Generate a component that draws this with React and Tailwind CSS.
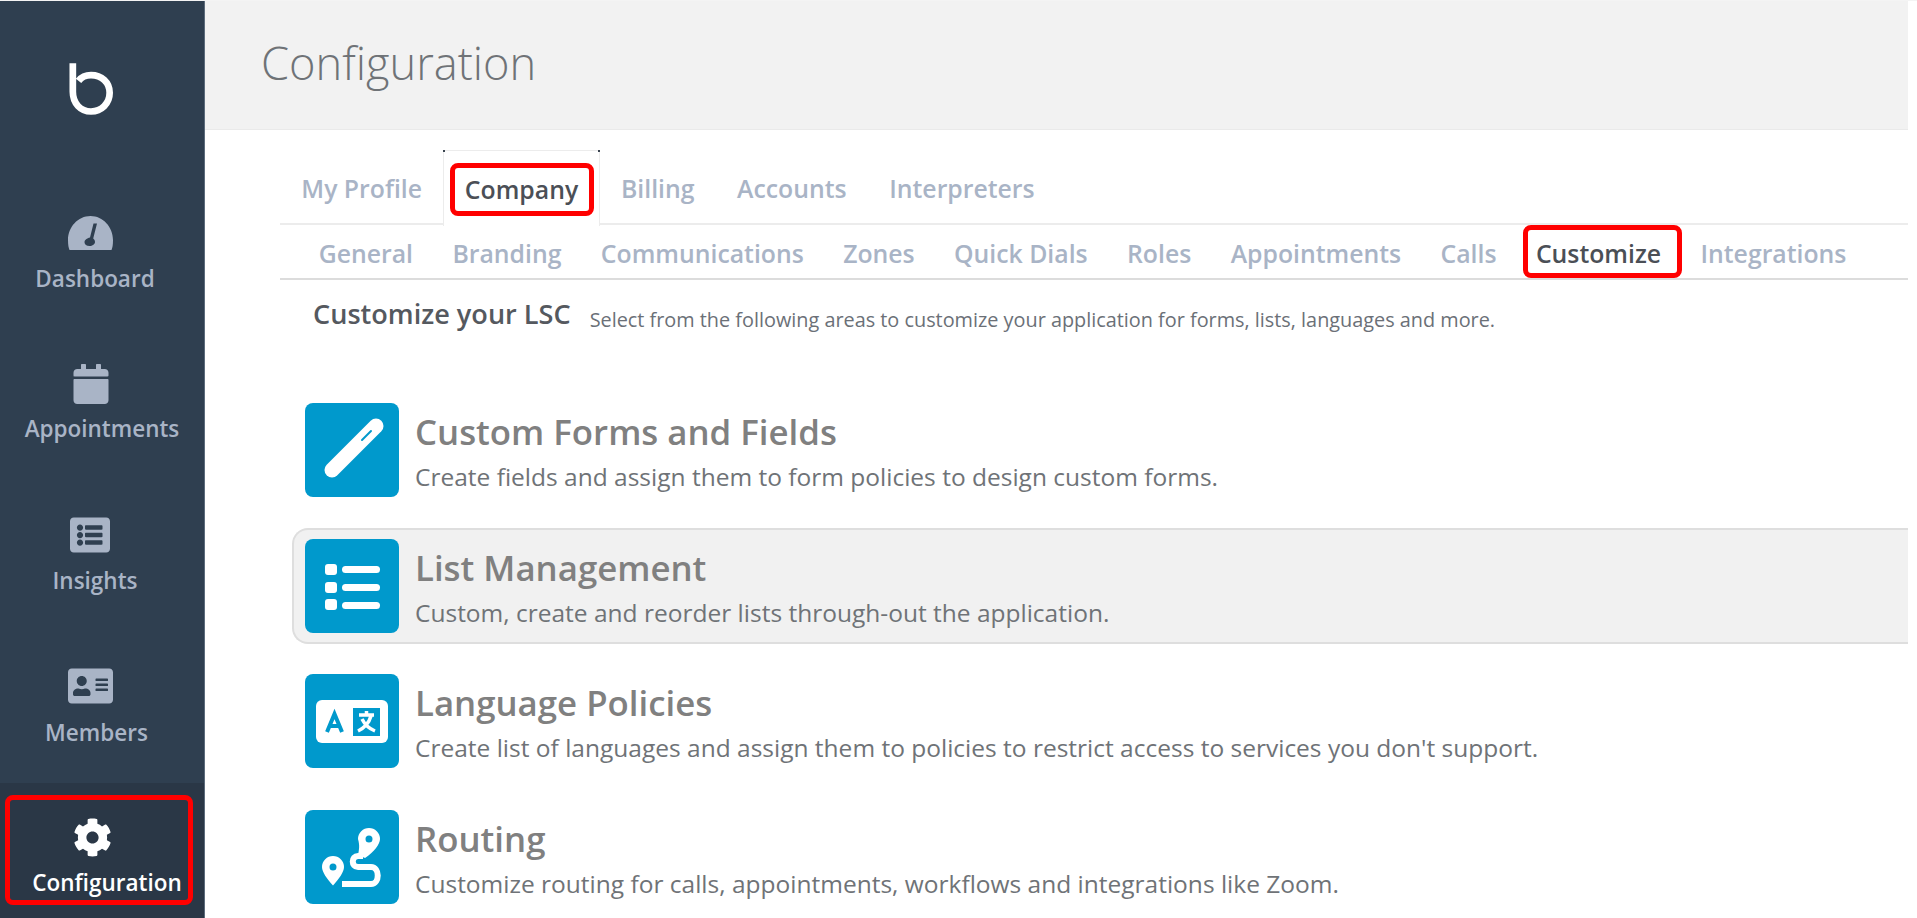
import React from "react";
import { FaCalendar, FaListAlt, FaAddressCard, FaCog } from "react-icons/fa";

const topTabs = ["My Profile", "Company", "Billing", "Accounts", "Interpreters"];
const subTabs = ["General", "Branding", "Communications", "Zones", "Quick Dials", "Roles", "Appointments", "Calls", "Customize", "Integrations"];

const GaugeIcon = () => (
  <svg viewBox="0 0 45 34" className="w-[45px] h-[34px]" fill="currentColor">
    <path fillRule="evenodd" d="M1.500 34C.5 31.500 0 29 0 24 0 11 10 0 22.500 0S45 11 45 24c0 5-.5 7.500-1.500 10zM29 7.500l-3.500 0-3.500 14c-3 .5-5.500 2.500-5.500 4.700 0 2.300 2 3.800 5 3.800s5.500-1.700 5.500-4c0-1.500-.7-2.800-1.800-3.500z" />
  </svg>
);

const Logo = () => (
  <svg viewBox="0 0 46 54" className="w-[44px] h-[54px]" fill="none" stroke="white" strokeWidth="7">
    <path d="M4 0V30C4 42 12 50.500 23 50.500S42.500 42 42.500 31 34 12.500 23 12.500c-6 0-10 2-13 6" />
  </svg>
);

const PenIcon = () => (
  <svg viewBox="0 0 94 94" className="w-full h-full">
    <path d="M71 23 L27 67" stroke="white" strokeWidth="15" strokeLinecap="round" />
    <path d="M57 37 L 66 28" stroke="#0099cc" strokeWidth="2" strokeLinecap="round" />
  </svg>
);

const ListIcon = () => (
  <svg viewBox="0 0 94 94" className="w-full h-full" fill="white">
    <rect x="20" y="25" width="12" height="11" rx="3" />
    <rect x="20" y="43" width="12" height="11" rx="3" />
    <rect x="20" y="60" width="12" height="11" rx="3" />
    <rect x="37" y="27" width="38" height="7" rx="3.500" />
    <rect x="37" y="45" width="38" height="7" rx="3.500" />
    <rect x="37" y="63" width="38" height="7" rx="3.500" />
  </svg>
);

const LanguageIcon = () => (
  <svg viewBox="0 0 94 94" className="w-full h-full">
    <rect x="11" y="26" width="72" height="43" rx="6" fill="white" />
    <path d="M22 58 L29.500 40 L37 58 M24.500 52 H34.500" stroke="#0099cc" strokeWidth="4" fill="none" />
    <rect x="48" y="34" width="27" height="28" fill="#0099cc" />
    <path d="M54 41 H69 M61.500 37 V41 M66 42 C64 49 59 54 53 57 M57 45 C60 51 65 55 70 57" stroke="white" strokeWidth="3.500" fill="none" />
  </svg>
);

const RoutingIcon = () => (
  <svg viewBox="0 0 94 94" className="w-full h-full">
    <path fillRule="evenodd" fill="white" d="M64 18a11 11 0 0 1 11 11c0 5-6 13-15 19l-7-3c1-5 2-9 0-16a11 11 0 0 1 11-11zM64 25.500a3.500 3.500 0 1 0 0 7 3.500 3.500 0 0 0 0-7z" />
    <path fillRule="evenodd" fill="white" d="M28 46a11 11 0 0 1 11 11c0 5-5 12-11 18.500C22 69 17 62 17 57a11 11 0 0 1 11-11zM28 53.500a3.500 3.500 0 1 0 0 7 3.500 3.500 0 0 0 0-7z" />
    <path d="M58 46 H53 C46 46 46 57 53 57 H66 C75 57 75 74 66 74 H37" fill="none" stroke="white" strokeWidth="6" />
  </svg>
);

const items = [
  { title: "Custom Forms and Fields", desc: "Create fields and assign them to form policies to design custom forms.", icon: <PenIcon /> },
  { title: "List Management", desc: "Custom, create and reorder lists through-out the application.", icon: <ListIcon />, active: true },
  { title: "Language Policies", desc: "Create list of languages and assign them to policies to restrict access to services you don't support.", icon: <LanguageIcon /> },
  { title: "Routing", desc: "Customize routing for calls, appointments, workflows and integrations like Zoom.", icon: <RoutingIcon /> },
];

const RedBox = ({ className }) => (
  <div className={"absolute border-[5px] border-[#ff0000] rounded-[8px] pointer-events-none " + className} />
);

const Sidebar = () => (
  <aside className="w-[205px] h-full shrink-0 bg-[#2f3f50] border-r border-[#5d6c7c] flex flex-col text-[#a9b4c6] text-[22.5px] font-semibold leading-[30px]">
    <div className="h-[215px] pt-[61px] pr-[22px] flex justify-center"><Logo /></div>
    <div className="h-[148px] flex flex-col items-center">
      <div className="mr-[24px]"><GaugeIcon /></div>
      <span className="mt-[14px] mr-[14px]">Dashboard</span>
    </div>
    <div className="h-[153px] flex flex-col items-center">
      <div className="mr-[22px]"><FaCalendar className="w-[36px] h-[40px]" /></div>
      <span className="mt-[10px]">Appointments</span>
    </div>
    <div className="h-[151px] flex flex-col items-center">
      <div className="mr-[24px] -mt-[2px]"><FaListAlt className="w-[40px] h-[40px]" /></div>
      <span className="mt-[11px] mr-[14px]">Insights</span>
    </div>
    <div className="h-[115px] flex flex-col items-center">
      <div className="mr-[24px] -mt-[2px]"><FaAddressCard className="w-[45px] h-[40px]" /></div>
      <span className="mt-[12px] mr-[11px]">Members</span>
    </div>
    <div className="relative flex-1 bg-[#2a3746] pt-[35px] flex flex-col items-center text-white">
      <div className="mr-[20px]"><FaCog className="w-[39px] h-[39px]" /></div>
      <span className="mt-[11px] ml-[10px]">Configuration</span>
      <RedBox className="left-[5px] top-[12px] w-[188px] h-[110px]" />
    </div>
  </aside>
);

export default function App() {
  return (
    <div className="w-full h-screen overflow-hidden flex bg-white border-t border-[#f4f4f4] font-['Open_Sans',sans-serif]">
      <Sidebar />
      <main className="flex-1 min-w-0 mr-[9px]">
        <header className="h-[129px] bg-[#f2f2f2] border-b border-[#eaeaea] pl-[56px] pt-[31px]">
          <h1 className="text-[45.200px] leading-[62px] font-light text-[#6f7377]">Configuration</h1>
        </header>

        <div className="pl-[75px]">
          <nav className="mt-[20px] h-[75px] flex border-b-2 border-[#ececec] text-[24.800px] leading-[30px] font-semibold text-[#a9b4c6]">
            {topTabs.map((t) => {
              const on = t === "Company";
              return (
                <div
                  key={t}
                  className={
                    on
                      ? "relative h-[76px] px-[20.500px] pt-[23px] bg-white border-t border-x border-[#ececec] text-[#4b4f56]"
                      : "px-[21.300px] pt-[23px]"
                  }
                >
                  {t}
                  {on && (
                    <>
                      <span className="absolute left-[-1px] top-[-1px] w-[2px] h-[2px] bg-[#3a4450]" />
                      <span className="absolute right-[-1px] top-[-1px] w-[2px] h-[2px] bg-[#3a4450]" />
                      <RedBox className="left-[6px] top-[12px] right-[5px] h-[53px]" />
                    </>
                  )}
                </div>
              );
            })}
          </nav>
          <nav className="h-[55px] pl-[19px] flex border-b-2 border-[#dcdcdc] text-[24.800px] leading-[30px] font-semibold text-[#a9b4c6]">
            {subTabs.map((t) => {
              const on = t === "Customize";
              return (
                <div key={t} className={"relative px-[19.700px] pt-[13px] " + (on ? "text-[#4b4f56]" : "")}>
                  {t}
                  {on && <RedBox className="left-[7px] top-0 right-[-1px] h-[53px]" />}
                </div>
              );
            })}
          </nav>
          <div className="ml-[33px] mt-[16px] h-[36px] flex items-start gap-[19px]">
            <h2 className="text-[27.100px] leading-[36px] font-semibold text-[#55595f]">Customize your LSC</h2>
            <p className="mt-[9px] text-[19.850px] text-[#6b7077]">Select from the following areas to customize your application for forms, lists, languages and more.</p>
          </div>

          <div className="mt-[60px] ml-[12px] flex flex-col gap-[19.500px]">
            {items.map((it) => (
              <div
                key={it.title}
                className={
                  "h-[116px] pl-[11px] flex items-center gap-[16px] rounded-l-[16px] border-y-2 border-l-2 " +
                  (it.active ? "bg-[#f1f1f1] border-[#dedede]" : "border-transparent")
                }
              >
                <div className="w-[94px] h-[94px] shrink-0 rounded-[8px] bg-[#0099cc]">{it.icon}</div>
                <div className="pt-[8px] whitespace-nowrap">
                  <h3 className="text-[34.800px] leading-[46px] font-semibold text-[#808080]">{it.title}</h3>
                  <p className="text-[24.500px] leading-[44px] text-[#6f7377]">{it.desc}</p>
                </div>
              </div>
            ))}
          </div>
        </div>
      </main>
    </div>
  );
}
